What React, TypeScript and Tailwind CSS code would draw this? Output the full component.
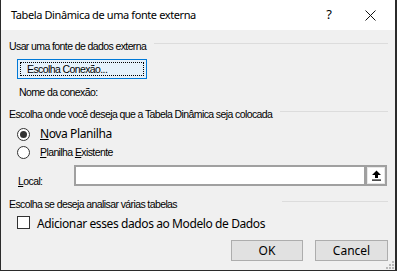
import { ReactNode } from 'react'

const small = "text-[10.5px] leading-[13px] tracking-[-0.6px] whitespace-nowrap text-black [font-family:'Liberation_Sans',Arial,sans-serif]"
const large = "text-[12px] leading-[16px] tracking-[-0.4px] whitespace-nowrap text-black [font-family:'Noto_Sans','Open_Sans',sans-serif]"

function SectionHeader({ children, lineWidth }: { children: ReactNode; lineWidth: string }) {
  return (
    <div className="flex items-center pl-[8px] pr-[7px] h-[14px]">
      <span className={small}>{children}</span>
      <div className={`ml-auto h-px bg-[#dcdcdc] mb-[5px] shrink-0 ${lineWidth}`} />
    </div>
  )
}

function Radio({ checked }: { checked?: boolean }) {
  return (
    <span className="w-[13px] h-[13px] rounded-full border border-[#333] bg-white flex items-center justify-center shrink-0">
      {checked && <span className="w-[7px] h-[7px] rounded-full bg-[#333]" />}
    </span>
  )
}

function App() {
  return (
    <div className="w-[397px] h-[271px] bg-[#f0f0f0] border-l border-r-2 border-b border-[#2b2b2b] flex flex-col relative overflow-hidden">
      {/* title bar */}
      <div className="h-[30px] bg-white flex items-center pl-[10px] shrink-0">
        <span className="text-[11px] tracking-[-0.4px] text-black [font-family:'Noto_Sans','Open_Sans',sans-serif]">
          Tabela Dinâmica de uma fonte externa
        </span>
        <span className="ml-auto w-[14px] text-center text-[13px] text-black [font-family:'Noto_Sans',sans-serif]">?</span>
        <svg className="ml-[29px] mr-[19px]" width="11" height="11" viewBox="0 0 11 11">
          <path d="M0.5 0.5 L10.5 10.5 M10.5 0.5 L0.5 10.5" stroke="#111" strokeWidth="1" />
        </svg>
      </div>

      <div className="mt-[9px]">
        <SectionHeader lineWidth="w-[234px]">Usar uma fonte de dados externa</SectionHeader>
      </div>

      <div className="mt-[6px] pl-[16px]">
        <button className="w-[130px] h-[20px] border border-[#0078d7] bg-[#e5f1fb] p-[2px] block">
          <div className="h-full border border-dotted border-black flex items-center pl-[6px]">
            <span className={small}>Escolha Conexão...</span>
          </div>
        </button>
      </div>

      <div className={`mt-[7px] pl-[18px] ${small}`}>Nome da conexão:</div>

      <div className="mt-[8px]">
        <SectionHeader lineWidth="w-[108px]">Escolha onde você deseja que a Tabela Dinâmica seja colocada</SectionHeader>
      </div>

      <div className="mt-[5px] pl-[16px] flex items-center gap-[10px]">
        <Radio checked />
        <span className={large}>
          <u>N</u>ova Planilha
        </span>
      </div>

      <div className="mt-[4px] pl-[16px] flex items-center gap-[10px]">
        <Radio />
        <span className={small}>
          <u>P</u>lanilha <u>E</u>xistente
        </span>
      </div>

      <div className="mt-[6px] pl-[17px] pr-[8px] flex items-start">
        <span className={`mt-[10px] w-[56px] ${small}`}>
          <u>L</u>ocal:
        </span>
        <div className="flex-1 h-[21px] border-2 border-[#a0a0a0] bg-white" />
        <div className="w-[22px] h-[21px] border-2 border-[#a0a0a0] bg-[#e8e8e8] flex items-center justify-center -ml-px">
          <div className="w-[16px] h-[15px] bg-white flex items-center justify-center">
            <svg width="11" height="11" viewBox="0 0 11 11">
              <path d="M5.5 0.5 L1 5 L4 5 L4 8 L7 8 L7 5 L10 5 Z" fill="#000" />
              <rect x="1" y="9.5" width="9" height="1.2" fill="#000" />
            </svg>
          </div>
        </div>
      </div>

      <div className="mt-[9px]">
        <SectionHeader lineWidth="w-[106px]">Escolha se deseja analisar várias tabelas</SectionHeader>
      </div>

      <div className="mt-[5px] pl-[16px] flex items-center gap-[7px]">
        <span className="w-[13px] h-[13px] border border-[#333] bg-white shrink-0 -mt-[3px]" />
        <span className={large}>Adicionar esses dados ao Modelo de Dados</span>
      </div>

      <div className="mt-[8px] pr-[7px] flex justify-end gap-[12px]">
        <button className="w-[72px] h-[21px] bg-[#e1e1e1] border border-[#adadad] flex items-center justify-center">
          <span className="text-[12px] text-black [font-family:'Noto_Sans','Open_Sans',sans-serif]">OK</span>
        </button>
        <button className="w-[73px] h-[21px] bg-[#e1e1e1] border border-[#adadad] flex items-center justify-center">
          <span className="text-[12px] text-black [font-family:'Noto_Sans','Open_Sans',sans-serif]">Cancel</span>
        </button>
      </div>

      {/* resize grip */}
      <svg className="absolute right-[1px] bottom-[1px]" width="8" height="8" viewBox="0 0 8 8">
        <rect x="6" y="0" width="2" height="2" fill="#b8b8b8" />
        <rect x="3" y="3" width="2" height="2" fill="#b8b8b8" />
        <rect x="6" y="3" width="2" height="2" fill="#b8b8b8" />
        <rect x="0" y="6" width="2" height="2" fill="#b8b8b8" />
        <rect x="3" y="6" width="2" height="2" fill="#b8b8b8" />
        <rect x="6" y="6" width="2" height="2" fill="#b8b8b8" />
      </svg>
    </div>
  )
}

export default App
